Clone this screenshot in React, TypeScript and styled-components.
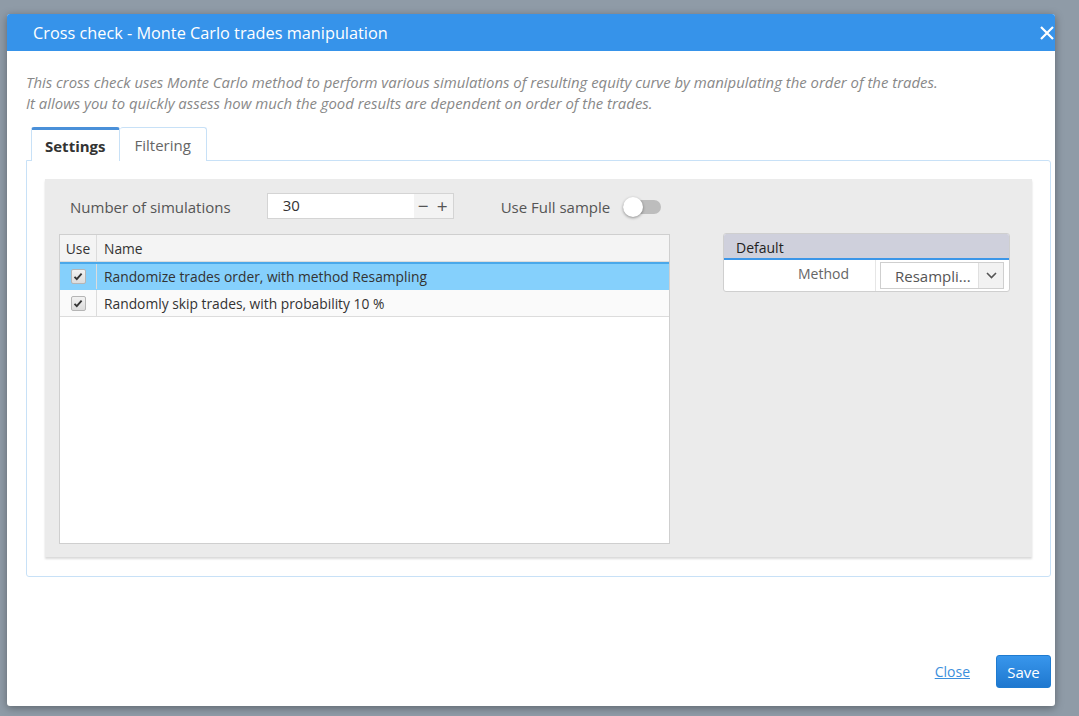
import React, { useState } from 'react';
import styled, { createGlobalStyle } from 'styled-components';

const GlobalStyle = createGlobalStyle`
  html, body {
    margin: 0;
    padding: 0;
    width: 1079px;
    height: 716px;
    overflow: hidden;
    font-family: 'Open Sans', 'Liberation Sans', sans-serif;
  }
`;

const Backdrop = styled.div`
  width: 1079px;
  height: 716px;
  background: #8f9ba7;
  padding: 14px 24px 10px 7px;
  box-sizing: border-box;
`;

const Modal = styled.div`
  width: 1048px;
  height: 692px;
  background: #fff;
  border-radius: 3px;
  box-shadow: 0 2px 8px rgba(0, 0, 0, 0.35);
  display: flex;
  flex-direction: column;
  overflow: hidden;
`;

const Header = styled.div`
  height: 37px;
  background: #3693ea;
  display: flex;
  align-items: center;
  justify-content: space-between;
  padding: 0 0 0 26px;
  flex-shrink: 0;

  h2 {
    margin: 0;
    font-size: 16.3px;
    font-weight: 400;
    color: #fff;
  }
`;

const CloseIcon = styled.button`
  padding: 0;
  border: none;
  background: transparent;
  width: 16px;
  height: 20px;
  display: flex;
  align-items: center;
  justify-content: center;
`;

const Body = styled.div`
  flex: 1;
  padding: 21px 4px 0 19px;
  display: flex;
  flex-direction: column;
`;

const Description = styled.p`
  margin: 0;
  font-size: 14.9px;
  line-height: 21px;
  font-style: italic;
  color: #888;
`;

const Tabs = styled.div`
  display: flex;
  margin: 13px 0 0 5px;
`;

const Tab = styled.div<{ active?: boolean }>`
  height: 34px;
  box-sizing: border-box;
  padding: 0 ${({ active }) => (active ? 13 : 15)}px;
  display: flex;
  align-items: center;
  font-size: 15px;
  color: ${({ active }) => (active ? '#333' : '#666')};
  font-weight: ${({ active }) => (active ? 700 : 400)};
  border: 1px solid #c8e1f7;
  border-bottom: none;
  border-top: ${({ active }) => (active ? '3px solid #4a90d9' : '1px solid #c8e1f7')};
  border-radius: 3px 3px 0 0;
  background: #fff;
  margin-bottom: -1px;
  position: relative;
  z-index: 1;
  & + & {
    border-left: none;
  }
`;

const TabPanel = styled.div`
  width: 1025px;
  height: 417px;
  box-sizing: border-box;
  border: 1px solid #c8e1f7;
  border-radius: 0 3px 3px 3px;
  padding: 18px;
`;

const GreyPanel = styled.div`
  height: 378px;
  background: #ebebeb;
  box-shadow: 0 2px 2px rgba(0, 0, 0, 0.15);
  padding: 14px 21px 13px 14px;
  box-sizing: border-box;
  display: flex;
  gap: 53px;
`;

const LeftColumn = styled.div`
  width: 611px;
  flex-shrink: 0;
  display: flex;
  flex-direction: column;
`;

const Toolbar = styled.div`
  display: flex;
  align-items: center;
  height: 26px;
  margin-bottom: 15px;
`;

const Label = styled.span<{ gap: number }>`
  font-size: 15px;
  color: #555;
  margin: 2px ${({ gap }) => gap}px 0 11px;
  white-space: nowrap;
`;

const Spinner = styled.div`
  display: flex;
  width: 187px;
  height: 26px;
  border: 1px solid #d4d4d4;
  box-sizing: border-box;
  background: #f3f3f3;
  margin-right: 36px;

  input {
    width: 146px;
    border: none;
    outline: none;
    background: #fff;
    font-family: inherit;
    font-size: 15px;
    color: #333;
    padding: 0 0 2px 15px;
    box-sizing: border-box;
  }
`;

const SpinButton = styled.span`
  width: 19px;
  display: flex;
  align-items: center;
  justify-content: center;
  font-size: 19px;
  color: #555;
  line-height: 1;
`;

const Toggle = styled.div`
  width: 38px;
  height: 14px;
  border-radius: 7px;
  background: #bdbdbd;
  position: relative;
  margin-top: 2px;

  &::after {
    content: '';
    position: absolute;
    left: 0;
    top: -3px;
    width: 20px;
    height: 20px;
    border-radius: 50%;
    background: #fff;
    box-shadow: 0 1px 3px rgba(0, 0, 0, 0.4);
  }
`;

const Table = styled.div`
  flex: 1;
  border: 1px solid #cfcfcf;
  background: #fff;
  display: flex;
  flex-direction: column;
`;

const Row = styled.div<{ kind?: 'head' | 'selected' | 'plain' }>`
  display: flex;
  height: ${({ kind }) => (kind === 'selected' ? 28 : 27)}px;
  box-sizing: border-box;
  background: ${({ kind }) =>
    kind === 'head' ? '#f4f4f4' : kind === 'selected' ? '#85d0fc' : '#fafafa'};
  border-top: ${({ kind }) => (kind === 'selected' ? '2px solid #4aa8ea' : 'none')};
  border-bottom: 1px solid ${({ kind }) => (kind === 'selected' ? '#85d0fc' : '#dcdcdc')};
`;

const Cell = styled.div<{ narrow?: boolean }>`
  display: flex;
  align-items: center;
  justify-content: ${({ narrow }) => (narrow ? 'center' : 'flex-start')};
  width: ${({ narrow }) => (narrow ? '36px' : 'auto')};
  flex: ${({ narrow }) => (narrow ? 'none' : 1)};
  padding: ${({ narrow }) => (narrow ? '0' : '0 7px')};
  border-right: ${({ narrow }) => (narrow ? '1px solid #dcdcdc' : 'none')};
  font-size: 13.8px;
  color: #333;
`;

const CheckBox = styled.span`
  width: 13px;
  height: 13px;
  border: 1px solid #b5b5b5;
  border-radius: 2px;
  background: linear-gradient(#f2f2f2, #dcdcdc);
  display: flex;
  align-items: center;
  justify-content: center;
`;

const PropertyGrid = styled.div`
  width: 287px;
  flex-shrink: 0;
  margin-top: 40px;
  align-self: flex-start;
  border: 1px solid #cfcfcf;
  border-radius: 3px;
  background: #fff;
  overflow: hidden;
  box-sizing: border-box;
`;

const GridHead = styled.div`
  height: 26px;
  background: #cfd0dc;
  border-bottom: 2px solid #3b96e8;
  box-sizing: border-box;
  display: flex;
  align-items: center;
  padding: 2px 0 0 12px;
  font-size: 14px;
  color: #222;
`;

const GridRow = styled.div`
  display: flex;
  height: 31px;
  align-items: center;
`;

const GridLabel = styled.div`
  width: 152px;
  height: 100%;
  display: flex;
  align-items: center;
  justify-content: flex-end;
  padding: 0 26px 5px 0;
  box-sizing: border-box;
  border-right: 1px solid #e6e6e6;
  font-size: 14px;
  color: #666;
`;

const Select = styled.div`
  margin: 0 0 0 4px;
  width: 124px;
  height: 27px;
  box-sizing: border-box;
  border: 1px solid #cfcfcf;
  display: flex;
  align-items: center;
  font-size: 15px;
  color: #555;

  span {
    flex: 1;
    padding-left: 14px;
    white-space: nowrap;
  }
`;

const SelectArrow = styled.div`
  width: 24px;
  height: 100%;
  background: #f2f2f2;
  border-left: 1px solid #e0e0e0;
  display: flex;
  align-items: center;
  justify-content: center;
`;

const Footer = styled.div`
  display: flex;
  justify-content: flex-end;
  align-items: center;
  gap: 26px;
  padding: 0 0 18px 0;
  margin-top: auto;
`;

const LinkButton = styled.a`
  font-size: 14px;
  color: #3c8fdc;
  text-decoration: underline;
  cursor: pointer;
`;

const SaveButton = styled.button`
  width: 55px;
  height: 33px;
  border: 1px solid #1f7bd0;
  border-radius: 3px;
  background: linear-gradient(#3896ec, #1f78cf);
  color: #fff;
  font-family: inherit;
  font-size: 15px;
  padding: 0;
`;

const rows = [
  { name: 'Randomize trades order, with method Resampling', selected: true },
  { name: 'Randomly skip trades, with probability 10 %', selected: false },
];

function Check() {
  return (
    <CheckBox>
      <svg width="10" height="9" viewBox="0 0 10 9">
        <path d="M1.5 4.8 L3.8 7.2 L8.6 1.6" fill="none" stroke="#333" strokeWidth="1.8" />
      </svg>
    </CheckBox>
  );
}

export default function App() {
  const [count, setCount] = useState(30);

  return (
    <>
      <GlobalStyle />
      <Backdrop>
        <Modal>
          <Header>
            <h2>Cross check - Monte Carlo trades manipulation</h2>
            <CloseIcon>
              <svg width="16" height="16" viewBox="0 0 16 16">
                <path d="M2 2 L14 14 M14 2 L2 14" stroke="#fff" strokeWidth="2.2" />
              </svg>
            </CloseIcon>
          </Header>
          <Body>
            <Description>
              This cross check uses Monte Carlo method to perform various simulations of resulting equity curve by
              manipulating the order of the trades.
              <br />
              It allows you to quickly assess how much the good results are dependent on order of the trades.
            </Description>
            <Tabs>
              <Tab active>Settings</Tab>
              <Tab>Filtering</Tab>
            </Tabs>
            <TabPanel>
              <GreyPanel>
                <LeftColumn>
                  <Toolbar>
                    <Label gap={36}>Number of simulations</Label>
                    <Spinner>
                      <input value={count} onChange={(e) => setCount(Number(e.target.value) || 0)} />
                      <SpinButton onClick={() => setCount(count - 1)}>−</SpinButton>
                      <SpinButton onClick={() => setCount(count + 1)}>+</SpinButton>
                    </Spinner>
                    <Label gap={13}>Use Full sample</Label>
                    <Toggle />
                  </Toolbar>
                  <Table>
                    <Row kind="head">
                      <Cell narrow>Use</Cell>
                      <Cell>Name</Cell>
                    </Row>
                    {rows.map((r) => (
                      <Row key={r.name} kind={r.selected ? 'selected' : 'plain'}>
                        <Cell narrow>
                          <Check />
                        </Cell>
                        <Cell>{r.name}</Cell>
                      </Row>
                    ))}
                  </Table>
                </LeftColumn>
                <PropertyGrid>
                  <GridHead>Default</GridHead>
                  <GridRow>
                    <GridLabel>Method</GridLabel>
                    <Select>
                      <span>Resampli...</span>
                      <SelectArrow>
                        <svg width="11" height="7" viewBox="0 0 11 7">
                          <path d="M1 1 L5.5 5.5 L10 1" fill="none" stroke="#555" strokeWidth="1.6" />
                        </svg>
                      </SelectArrow>
                    </Select>
                  </GridRow>
                </PropertyGrid>
              </GreyPanel>
            </TabPanel>
            <Footer>
              <LinkButton>Close</LinkButton>
              <SaveButton>Save</SaveButton>
            </Footer>
          </Body>
        </Modal>
      </Backdrop>
    </>
  );
}
